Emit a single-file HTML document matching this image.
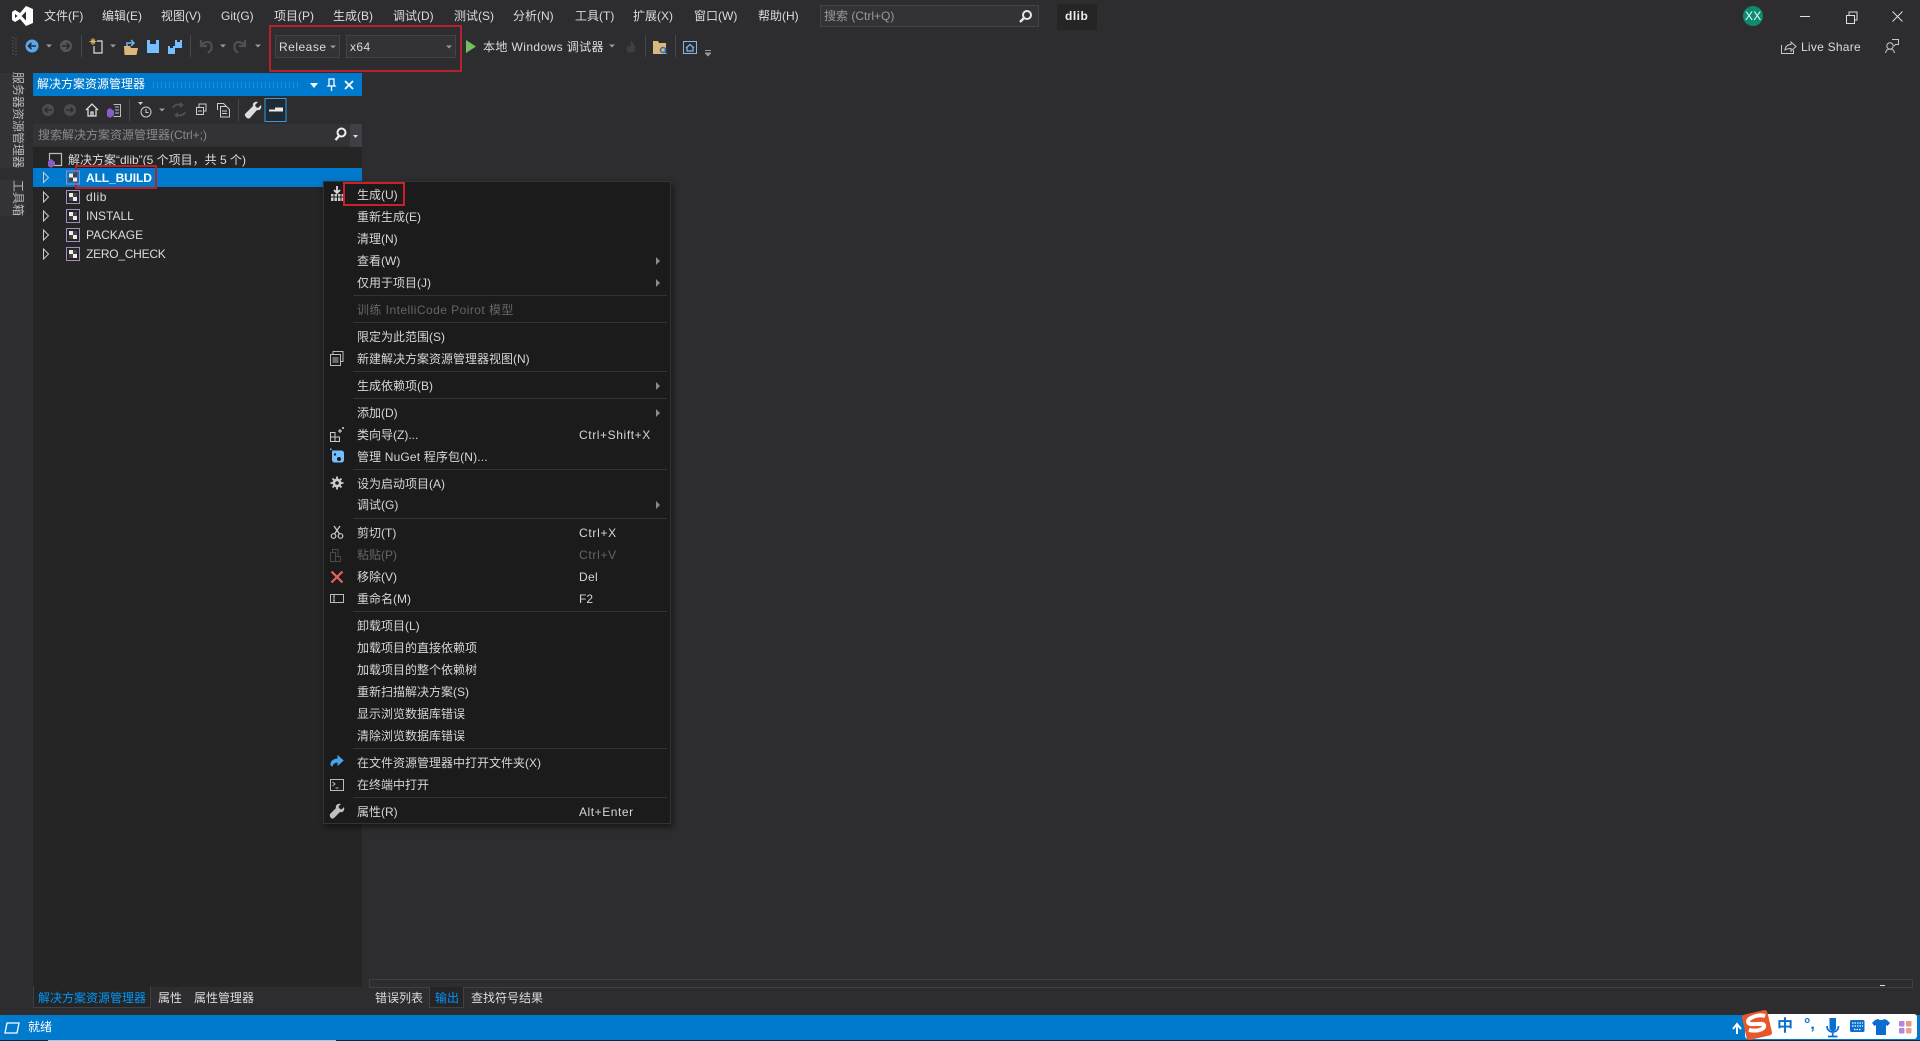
<!DOCTYPE html>
<html lang="zh-CN"><head><meta charset="utf-8"><title>dlib</title>
<style>
html,body{margin:0;padding:0;width:1920px;height:1041px;overflow:hidden;background:#2d2d30}
body{position:relative;font:12px/18px "Liberation Sans","Noto Sans CJK SC",sans-serif;color:#dcdcdc}
i{position:absolute;font-style:normal;white-space:nowrap;line-height:18px}
div.b{position:absolute;box-sizing:border-box}
svg{position:absolute;left:0;top:0}
.menu i{color:#d6d6d6}
.menu i.d{color:#656565}
.sep{position:absolute;left:353px;width:314px;height:1px;background:#333337}
</style></head><body>

<!-- top menu -->
<i style="left:44px;top:7px">文件(F)</i>
<i style="left:102px;top:7px">编辑(E)</i>
<i style="left:161px;top:7px">视图(V)</i>
<i style="left:221px;top:7px">Git(G)</i>
<i style="left:274px;top:7px">项目(P)</i>
<i style="left:333px;top:7px">生成(B)</i>
<i style="left:393px;top:7px">调试(D)</i>
<i style="left:454px;top:7px">测试(S)</i>
<i style="left:513px;top:7px">分析(N)</i>
<i style="left:575px;top:7px">工具(T)</i>
<i style="left:633px;top:7px">扩展(X)</i>
<i style="left:694px;top:7px">窗口(W)</i>
<i style="left:758px;top:7px">帮助(H)</i>
<div class="b" style="left:820px;top:5px;width:219px;height:22px;background:#333337;border:1px solid #434346"></div>
<i style="left:824px;top:7px;color:#999">搜索 (Ctrl+Q)</i>
<div class="b" style="left:1057px;top:4px;width:40px;height:26px;background:#252526"></div>
<i style="left:1065px;top:7px;color:#eee;font-weight:bold;letter-spacing:.5px">dlib</i>
<i style="left:1745px;top:7px;color:#dff;letter-spacing:.2px;z-index:2">XX</i>

<!-- toolbar combos -->
<div class="b" style="left:275px;top:35px;width:65px;height:23px;background:#333337;border:1px solid #434346"></div>
<i style="left:279px;top:38px;letter-spacing:.5px">Release</i>
<div class="b" style="left:346px;top:35px;width:110px;height:23px;background:#333337;border:1px solid #434346"></div>
<i style="left:350px;top:38px;letter-spacing:.4px">x64</i>
<i style="left:483px;top:38px;letter-spacing:.4px">本地 Windows 调试器</i>
<i style="left:1801px;top:38px;letter-spacing:.25px">Live Share</i>

<!-- left strip -->
<div class="b" style="left:0;top:73px;width:24px;height:95px;background:#333337"></div>
<div class="b" style="left:0;top:180px;width:24px;height:36px;background:#333337"></div>
<i style="left:11px;top:72px;writing-mode:vertical-rl;text-orientation:sideways;color:#b8b8b8;line-height:13px">服务器资源管理器</i>
<i style="left:11px;top:180px;writing-mode:vertical-rl;text-orientation:sideways;color:#b8b8b8;line-height:13px">工具箱</i>

<!-- solution explorer -->
<div class="b" style="left:33px;top:73px;width:329px;height:914px;background:#252526"></div>
<div class="b" style="left:33px;top:73px;width:329px;height:23px;background:#007acc"></div>
<i style="left:37px;top:75px;color:#fff">解决方案资源管理器</i>
<div class="b" style="left:33px;top:96px;width:329px;height:28px;background:#2d2d30"></div>
<div class="b" style="left:33px;top:124px;width:329px;height:23px;background:#333337;border-bottom:1px solid #2d2d30"></div>
<div class="b" style="left:350px;top:124px;width:12px;height:23px;background:#3f3f46"></div>
<i style="left:38px;top:126px;color:#8a8a8a">搜索解决方案资源管理器(Ctrl+;)</i>
<i style="left:68px;top:151px">解决方案“dlib”(5 个项目，共 5 个)</i>
<div class="b" style="left:33px;top:168px;width:329px;height:19px;background:#007acc"></div>
<i style="left:86px;top:169px;color:#fff;font-weight:bold;letter-spacing:-.1px">ALL_BUILD</i>
<i style="left:86px;top:188px;letter-spacing:.6px">dlib</i>
<i style="left:86px;top:207px">INSTALL</i>
<i style="left:86px;top:226px">PACKAGE</i>
<i style="left:86px;top:245px;letter-spacing:-.25px">ZERO_CHECK</i>

<!-- bottom tabs -->
<div class="b" style="left:33px;top:986px;width:118px;height:22px;background:#252526;border:1px solid #3f3f46;border-top:0"></div>
<i style="left:38px;top:989px;color:#0097fb">解决方案资源管理器</i>
<i style="left:158px;top:989px">属性</i>
<i style="left:194px;top:989px">属性管理器</i>
<div class="b" style="left:369px;top:979px;width:1544px;height:9px;border:1px solid #3f3f46"></div>
<div class="b" style="left:429px;top:987px;width:35px;height:21px;background:#252526;border:1px solid #3f3f46;border-top:0"></div>
<i style="left:375px;top:989px">错误列表</i>
<i style="left:435px;top:989px;color:#0097fb">输出</i>
<i style="left:471px;top:989px">查找符号结果</i>
<div class="b" style="left:1880px;top:985px;width:5px;height:1px;background:#ddd"></div>

<!-- status bar -->
<div class="b" style="left:0;top:1015px;width:1920px;height:25px;background:#007acc"></div>
<div class="b" style="left:0;top:1040px;width:1920px;height:1px;background:#0b2a3c"></div>
<div class="b" style="left:48px;top:1040px;width:288px;height:1px;background:#a9c9df"></div>
<i style="left:28px;top:1018px;color:#fff">就绪</i>
<div class="b" style="left:1745px;top:1014px;width:172px;height:25px;background:#fff;border-radius:3px"></div>
<i style="left:1777px;top:1017px;color:#0a6ed1;font-size:16px;font-weight:bold;line-height:20px">中</i>
<i style="left:1804px;top:1015px;color:#0a6ed1;font-size:16px;font-weight:bold;line-height:20px">°,</i>

<!-- context menu -->
<div class="b" style="left:323px;top:181px;width:348px;height:643px;background:#1b1b1c;border:1px solid #333337;box-shadow:2px 3px 6px rgba(0,0,0,.5)"></div>
<div class="menu">
<i style="left:357px;top:186px">生成(U)</i>
<i style="left:357px;top:208px">重新生成(E)</i>
<i style="left:357px;top:230px">清理(N)</i>
<i style="left:357px;top:252px">查看(W)</i>
<i style="left:357px;top:274px">仅用于项目(J)</i>
<div class="sep" style="top:295px"></div>
<i class="d" style="left:357px;top:301px;letter-spacing:.45px">训练 IntelliCode Poirot 模型</i>
<div class="sep" style="top:322px"></div>
<i style="left:357px;top:328px">限定为此范围(S)</i>
<i style="left:357px;top:350px">新建解决方案资源管理器视图(N)</i>
<div class="sep" style="top:371px"></div>
<i style="left:357px;top:377px">生成依赖项(B)</i>
<div class="sep" style="top:398px"></div>
<i style="left:357px;top:404px">添加(D)</i>
<i style="left:357px;top:426px">类向导(Z)...</i>
<i style="left:579px;top:426px;letter-spacing:.6px">Ctrl+Shift+X</i>
<i style="left:357px;top:448px;letter-spacing:.15px">管理 NuGet 程序包(N)...</i>
<div class="sep" style="top:469px"></div>
<i style="left:357px;top:475px">设为启动项目(A)</i>
<i style="left:357px;top:496px">调试(G)</i>
<div class="sep" style="top:518px"></div>
<i style="left:357px;top:524px">剪切(T)</i>
<i style="left:579px;top:524px;letter-spacing:.7px">Ctrl+X</i>
<i class="d" style="left:357px;top:546px">粘贴(P)</i>
<i class="d" style="left:579px;top:546px;letter-spacing:.7px">Ctrl+V</i>
<i style="left:357px;top:568px">移除(V)</i>
<i style="left:579px;top:568px;letter-spacing:.3px">Del</i>
<i style="left:357px;top:590px">重命名(M)</i>
<i style="left:579px;top:590px">F2</i>
<div class="sep" style="top:611px"></div>
<i style="left:357px;top:617px">卸载项目(L)</i>
<i style="left:357px;top:639px">加载项目的直接依赖项</i>
<i style="left:357px;top:661px">加载项目的整个依赖树</i>
<i style="left:357px;top:683px">重新扫描解决方案(S)</i>
<i style="left:357px;top:705px">显示浏览数据库错误</i>
<i style="left:357px;top:727px">清除浏览数据库错误</i>
<div class="sep" style="top:748px"></div>
<i style="left:357px;top:754px">在文件资源管理器中打开文件夹(X)</i>
<i style="left:357px;top:776px">在终端中打开</i>
<div class="sep" style="top:797px"></div>
<i style="left:357px;top:803px">属性(R)</i>
<i style="left:579px;top:803px;letter-spacing:.55px">Alt+Enter</i>
</div>

<!-- red annotations -->
<div class="b" style="left:269px;top:25px;width:193px;height:47px;border:2px solid #b5202d"></div>
<div class="b" style="left:75px;top:165px;width:82px;height:24px;border:2px solid #b5202d"></div>
<div class="b" style="left:343px;top:182px;width:62px;height:24px;border:2px solid #c8202d"></div>

<svg width="1920" height="1041" viewBox="0 0 1920 1041" fill="none">
<defs>
<g id="dd"><path d="M-3-1.500H3L0 1.500Z" fill="#999"/></g>
<g id="arr"><path d="M-2.500-5L2.500 0-2.500 5Z" stroke="#ccc" stroke-width="1" fill="none"/></g>
<g id="sub"><path d="M-2-4L2 0-2 4Z" fill="#8a8a8a"/></g>
<g id="proj"><rect x="-6.500" y="-6.500" width="13" height="13" stroke="#a58bc0"/><path d="M-4-4H0V0H-4ZM0 0H4V4H0Z" fill="#eee"/><path d="M0-4H4V0H0ZM-4 0H0V4H-4Z" fill="#444"/></g>
</defs>

<!-- VS logo -->
<path d="M12 12L15 10 20 13 26 6 33 9V23L26 26 20 19 15 22 12 20ZM15 14V18L17.500 16ZM26 11.500L21.500 16 26 20.500Z" fill="#fff" fill-rule="evenodd"/>
<!-- title search mag -->
<circle cx="1027" cy="15" r="4" stroke="#e6e6e6" stroke-width="2"/><path d="M1024 18L1020 22" stroke="#e6e6e6" stroke-width="2.400"/>

<!-- toolbar -->
<path d="M13 37v18M16 38v18" stroke="#555" stroke-width="1.400" stroke-dasharray="1.200 2"/>
<circle cx="32" cy="46" r="6.500" fill="#5aa8ea"/><path d="M36 46H29M31.500 43L28.500 46 31.500 49" stroke="#1f2f3f" stroke-width="1.600"/>
<use href="#dd" x="49" y="46"/>
<circle cx="66" cy="46" r="6" fill="#555"/><path d="M62 46H69M66.500 43L69.500 46 66.500 49" stroke="#2d2d30" stroke-width="1.600"/>
<path d="M81.500 35V57M190.500 35V57M645.500 35V57M675.500 35V57" stroke="#48484c"/>
<path d="M97 41h5v12h-8v-7" stroke="#ddd" stroke-width="1.200"/><path d="M93 38v7M89.500 41.500h7M91 39.500l4 4M95 39.500l-4 4" stroke="#d9b26c" stroke-width="1.100"/>
<use href="#dd" x="113" y="46"/>
<path d="M124 46h6l1 2h7l-1.500 7h-12Z" fill="#dcb67a"/><path d="M127 46v-3h6M131 40l3 3-3 3" stroke="#6db3ee" stroke-width="1.500"/>
<path d="M147 40h12v13h-12Z" fill="#75beff"/><path d="M150 40h6v4h-6Z" fill="#2d2d30"/>
<path d="M168 46h7v8h-7Z" fill="#75beff"/><path d="M175 40h7v8h-7Z" fill="#75beff"/><path d="M170 46h3v2h-3ZM177 40h3v2h-3Z" fill="#2d2d30"/>
<path d="M201 40v6h6M201.500 45.500C206 39 214 42 211 50l-3 3" stroke="#4f4f52" stroke-width="2.200"/>
<use href="#dd" x="223" y="46"/>
<path d="M245 40v6h-6M244.500 45.500C240 39 232 42 235 50l3 3" stroke="#4f4f52" stroke-width="2.200"/>
<use href="#dd" x="258" y="46"/>
<use href="#dd" x="333" y="47"/>
<use href="#dd" x="449" y="47"/>
<path d="M466 40L476 46.500 466 53Z" fill="#71bf5e"/>
<use href="#dd" x="612" y="46"/>
<path d="M631 40c1 3 5 5 4 10-1 3-6 4-8 1-2-3 1-4 1-6 1 1 1 2 2 2 1-2 0-4 1-7Z" fill="#3f3f41"/>
<path d="M653 41h5l1 2h7v11h-13Z" fill="#dcb67a"/><circle cx="663" cy="50" r="2.500" stroke="#1e70c2" stroke-width="1.500"/><path d="M665 52l2 2" stroke="#1e70c2" stroke-width="1.500"/>
<rect x="683.500" y="41.500" width="13" height="12" stroke="#8ab6dc"/><path d="M686 48l4-3.500 4 3.500M687 47.500v3.500h6v-3.500" stroke="#75beff" stroke-width="1.200"/>
<path d="M705 50.500h6M705 53h6" stroke="#999"/><use href="#dd" x="708" y="55"/>

<!-- right title -->
<circle cx="1753" cy="16" r="10" fill="#0e8a70"/>
<path d="M1800 16.500h10" stroke="#ddd"/>
<rect x="1846.500" y="15.500" width="8" height="8" stroke="#ddd"/><path d="M1849 15v-3h8v8h-2.500" stroke="#ddd"/>
<path d="M1892.500 11.500l10 10M1902.500 11.500l-10 10" stroke="#ddd"/>
<path d="M1781.500 45v8.500h12V50M1785 50c.5-4 3-5.500 6-5.500V42l5 4.500-5 4.500v-2.500c-2 0-4.500 .5-6 1.500Z" stroke="#c8c8c8"/>
<circle cx="1890" cy="46" r="3.200" stroke="#c8c8c8"/><path d="M1885.500 53c.5-3 2-4 4.500-4s4 1 4.500 4" stroke="#c8c8c8"/><path d="M1892 39.500h6.500v5h-3l-1.500 1.500" stroke="#c8c8c8"/>

<!-- solution explorer title -->
<path d="M153 83h147M153 85h147M153 87h147" stroke="#3f9fdb" stroke-width="1" stroke-dasharray="1 3"/>
<path d="M310 83H318L314 88Z" fill="#fff"/>
<path d="M329 79h5v6l1 1h-7l1-1ZM331.500 86v5" stroke="#fff" stroke-width="1.300"/>
<path d="M345 81l8 8M353 81l-8 8" stroke="#fff" stroke-width="1.700"/>

<!-- solution explorer toolbar -->
<circle cx="48" cy="110" r="6" fill="#4c4c4e"/><path d="M52 110H45M47.500 107.500L45 110 47.500 112.500" stroke="#2d2d30" stroke-width="1.500"/>
<circle cx="70" cy="110" r="6" fill="#4c4c4e"/><path d="M66 110H73M70.500 107.500L73 110 70.500 112.500" stroke="#2d2d30" stroke-width="1.500"/>
<path d="M86 110l6-6 6 6M88 109v7h8v-7M91 116v-4h2v4" stroke="#ddd" stroke-width="1.300"/>
<path d="M113.500 104.500h7v12h-7" stroke="#bbb"/><path d="M115 107h4M115 110h4M115 113h4" stroke="#bbb"/>
<path d="M107 110l3-2 4 3v4l-4 3-3-2Z" fill="#8a5cc8"/>
<path d="M129.500 99V121M238.500 99V121" stroke="#46464a"/>
<circle cx="146" cy="112" r="5" stroke="#ccc"/><path d="M146 109v3.500h2.500" stroke="#ccc"/><path d="M138 102h5L140.500 105Z" fill="#ccc"/>
<use href="#dd" x="162" y="110"/>
<path d="M173 108c1-3 4-4 8-3M185 112c-1 3-4 4-8 3" stroke="#4f4f52" stroke-width="2"/><path d="M180 102l4 3-4 3ZM178 112l-4 3 4 3Z" fill="#4f4f52"/>
<rect x="196.500" y="107.500" width="7" height="7" stroke="#ccc"/><path d="M199 107v-3h7v7h-2.500" stroke="#ccc"/><path d="M198 111h4" stroke="#ccc"/>
<path d="M217.500 110v-6.500h6l3 3" stroke="#ccc"/><path d="M220.500 106.500h6l3 3v7.500h-9Z" stroke="#ccc"/><path d="M222 111h5M222 113.500h5" stroke="#ccc"/>
<path d="M248 115l8-8c-1-3 2-5 5-4l-3 3 1 2 2 1 3-3c1 3-1 6-4 5l-7 8c-2 2-6-2-5-4Z" fill="#ddd" transform="translate(-3 -1)"/>
<rect x="265" y="98.500" width="21" height="23" fill="#1f2a33" stroke="#3399e0"/>
<path d="M269 110.500h14M275 108.500h8" stroke="#e8e8e8" stroke-width="2"/>

<!-- SE search mag -->
<circle cx="341.500" cy="132.500" r="4" stroke="#eee" stroke-width="2"/><path d="M339 136l-3.500 4" stroke="#eee" stroke-width="2.400"/>
<path d="M353 135H358L355.500 138Z" fill="#ddd"/>

<!-- tree -->
<path d="M49.500 160v-6.500h12v12h-9" stroke="#bbb" stroke-width="1.200"/>
<path d="M48 161l3-2 4 3v3l-4 3-3-2Z" fill="#8a5cc8"/>
<use href="#arr" x="46" y="177.500"/><use href="#proj" x="73" y="177.500"/>
<use href="#arr" x="46" y="197"/><use href="#proj" x="73" y="197"/>
<use href="#arr" x="46" y="216"/><use href="#proj" x="73" y="216"/>
<use href="#arr" x="46" y="235"/><use href="#proj" x="73" y="235"/>
<use href="#arr" x="46" y="254"/><use href="#proj" x="73" y="254"/>

<!-- context menu arrows -->
<use href="#sub" x="658" y="261"/><use href="#sub" x="658" y="283"/><use href="#sub" x="658" y="386"/><use href="#sub" x="658" y="413"/><use href="#sub" x="658" y="505"/>

<!-- context menu icons -->
<path d="M337 186v6M334 190l3 3 3-3" stroke="#ddd" stroke-width="1.800"/><path d="M331 194h12v7h-12Z" fill="#ccc"/><path d="M331 197h12M334 194v7M337.500 194v7M341 194v7" stroke="#1b1b1c"/>
<rect x="330.500" y="354.500" width="10" height="11" stroke="#bbb"/><path d="M333 354v-2.500h10v10h-2.500" stroke="#bbb"/><path d="M332.500 358h6M332.500 360h6M332.500 362h6" stroke="#bbb"/>
<path d="M330.500 432.500h4.500v4.500h-4.500ZM330.500 437h4.500v4.500h-4.500ZM335 437h4.500v4.500h-4.500Z" stroke="#ccc"/><path d="M340 429v4M338 431h4M343 427v2M342 428h2" stroke="#ddd"/>
<path d="M332 450.500h9c2 0 3 1 3 3v6c0 2-1 3-3 3h-6c-2 0-3-1-3-3Z" fill="#75beff"/><circle cx="339" cy="459" r="2" fill="#1b1b1c"/><circle cx="335" cy="454.500" r="1.200" fill="#1b1b1c"/><path d="M330 448.500h1.500v1.500H330Z" fill="#75beff"/>
<circle cx="337" cy="483" r="3" stroke="#ccc" stroke-width="3"/><path d="M337 476.500v13M330.500 483h13M332.500 478.500l9 9M341.500 478.500l-9 9" stroke="#ccc" stroke-width="1.800"/><circle cx="337" cy="483" r="1.800" fill="#1b1b1c"/>
<circle cx="333.500" cy="536" r="2.300" stroke="#ccc" stroke-width="1.200"/><circle cx="340.500" cy="536" r="2.300" stroke="#ccc" stroke-width="1.200"/><path d="M334.500 534L340 526M339.500 534L334 526" stroke="#ccc" stroke-width="1.200"/>
<path d="M330.500 552.500h5v9h-5ZM335.500 556.500h5v5h-5ZM332.500 552v-2.500h5.500v7" stroke="#4a4a4c"/>
<path d="M331.500 571.500l11 11M342.500 571.500l-11 11" stroke="#e8625c" stroke-width="2.200"/>
<rect x="330.500" y="594.500" width="13" height="8" stroke="#bbb"/><path d="M334 596v5M333 596h2M333 601h2" stroke="#bbb"/>
<path d="M332 766v-1c0-3 3-5 7-5v-3l5 4.500-5 4.500v-3c-3 0-5 1-6 4Z" fill="#4aa3e8" stroke="#4aa3e8" transform="translate(-1 -1)"/>
<rect x="330.500" y="779.500" width="13" height="11" stroke="#bbb"/><path d="M332.500 782l2.500 2-2.500 2M335.500 788h3" stroke="#bbb"/>
<path d="M331 815l6-6c-1-3 2-5 5-4l-2.500 2.500 1 2 2 1 2.500-2.500c1 3-1 6-4 5l-6 6c-2 2-5-1-4-4Z" fill="#c0c0c0" transform="translate(-1 -1)"/>

<!-- status -->
<path d="M5 1033l2-10h12l-2 10Z" stroke="#fff" stroke-width="1.300"/>
<path d="M1737 1034v-9M1733 1029l4-5 4 5" stroke="#fff" stroke-width="2"/>
<g transform="rotate(-13 1757 1025)"><rect x="1744" y="1012" width="26" height="26" rx="3" fill="#e8562a"/><path d="M1767 1018c-4-2-9-3-15-1-4 1.500-4 5 0 6l10 2c3 1 2 4-1 5-4 1-9 0-13-2" stroke="#fff" stroke-width="4" fill="none"/></g>
<path d="M1829.500 1018h6.500v10c0 4-6.500 4-6.500 0Z" fill="#0a6ed1"/><path d="M1827 1026c0 8 11.500 8 11.500 0M1832.700 1033v3M1828 1036.500h9.500" stroke="#0a6ed1" stroke-width="1.700"/>
<rect x="1850" y="1020" width="14.500" height="12" rx="1.500" fill="#0a6ed1"/><path d="M1852 1023h11M1852 1026h11M1854 1029.500h7" stroke="#fff" stroke-dasharray="1.500 1" stroke-width="1.300"/>
<path d="M1875 1020l3-1c2 1.500 4.500 1.500 6 0l3 1 3 3-2.500 3-1.500-1v10h-10v-10l-1.500 1-2.500-3Z" fill="#0a6ed1"/>
<rect x="1899" y="1021" width="5.500" height="5.500" rx="1" fill="#b784d8"/><rect x="1906" y="1021" width="5.500" height="5.500" rx="1" fill="#e89a7e"/><rect x="1899" y="1028" width="5.500" height="5.500" rx="1" fill="#b088e0"/><rect x="1906" y="1028" width="5.500" height="5.500" rx="1" fill="#e8a090"/>
</svg>
</body></html>
